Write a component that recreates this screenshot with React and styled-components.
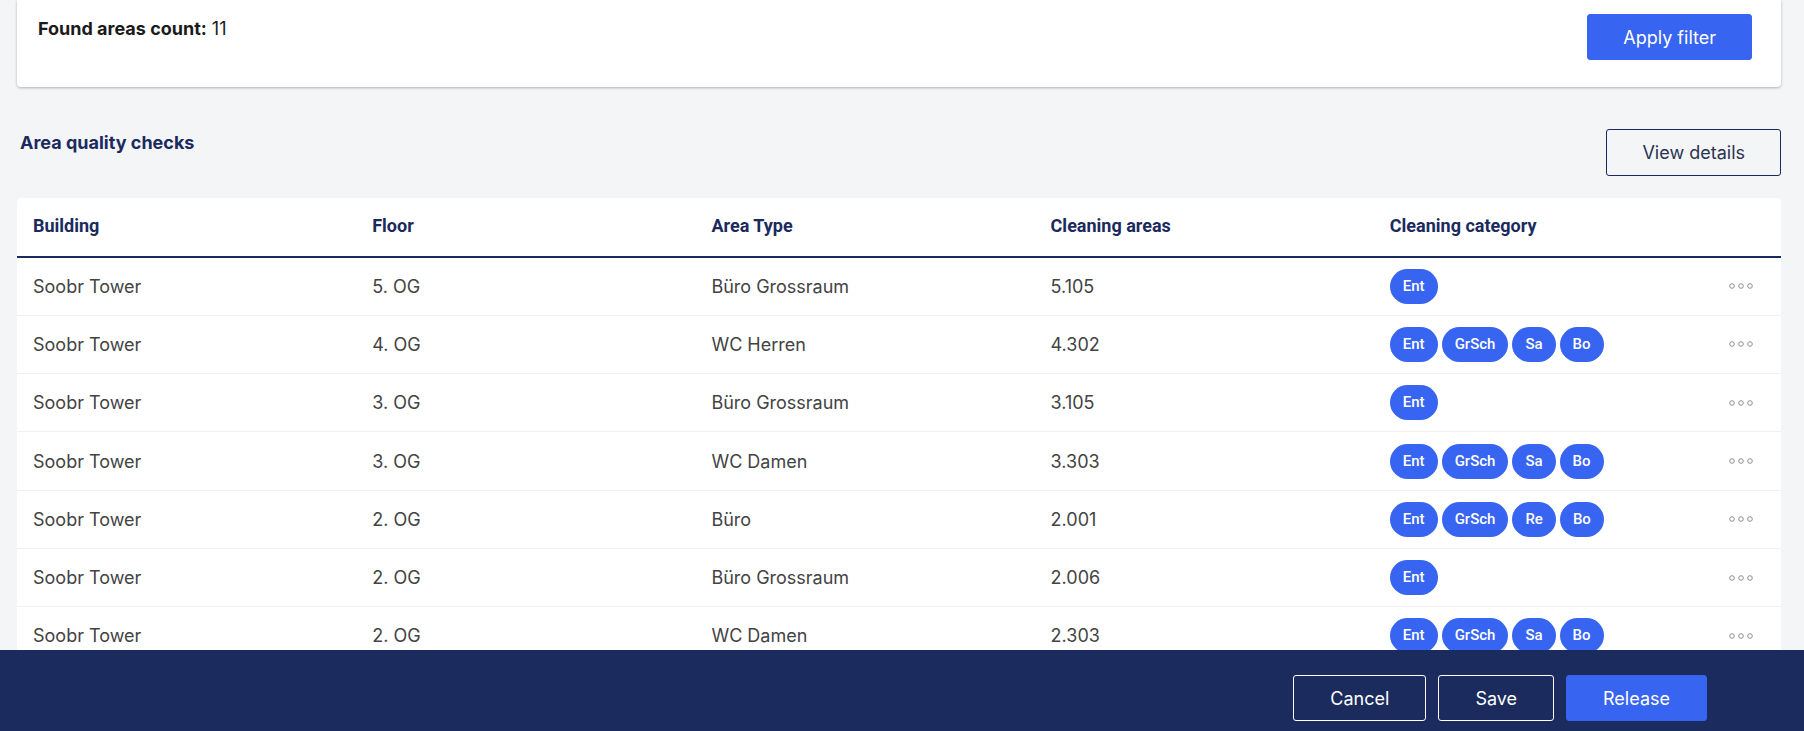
import React from 'react'
import styled, { createGlobalStyle } from 'styled-components'

const GlobalStyle = createGlobalStyle`
  body {
    margin: 0;
    background: #f4f5f7;
    font-family: Inter, "Noto Sans", sans-serif;
  }
`

const Page = styled.div`
  height: 100vh;
  display: flex;
  flex-direction: column;
  overflow: hidden;
`

const Main = styled.main`
  flex: 1;
  overflow: hidden;
  padding: 0 23px 0 17px;
`

const FilterCard = styled.section`
  background: #fff;
  border-radius: 0 0 4px 4px;
  box-shadow: 0 1px 3px rgba(0, 0, 0, .28);
  padding: 14px 29px 27px 21px;
  display: flex;
  justify-content: space-between;
  align-items: flex-start;
`

const Count = styled.div`
  padding-top: 4px;
  font-size: 18px;
  color: #1a1a1a;
  b {
    font-weight: 700;
  }
`

const Button = styled.button`
  height: ${p => p.h || 46}px;
  padding: 0 ${p => p.pad || 36}px;
  font-family: Inter, "Noto Sans", sans-serif;
  font-size: 18px;
  border-radius: 3px;
  cursor: pointer;
  border: 1px solid ${p => p.variant === 'primary' ? '#3764f0' : p.variant === 'ghost' ? '#fff' : '#1b2a5e'};
  background: ${p => p.variant === 'primary' ? '#3764f0' : 'transparent'};
  color: ${p => p.variant === 'outline' ? '#2b3350' : '#fff'};
`

const SectionHead = styled.div`
  display: flex;
  justify-content: space-between;
  align-items: flex-start;
  margin-top: 42px;
  margin-bottom: 22px;
`

const Title = styled.h2`
  margin: 3px 0 0 3px;
  font-size: 18px;
  font-weight: 700;
  color: #1b2a5e;
`

const Table = styled.div`
  background: #fff;
  border-radius: 4px 4px 0 0;
`

const Row = styled.div`
  display: grid;
  grid-template-columns: repeat(5, 1fr) 52px;
  align-items: center;
  padding-left: 16px;
  padding-bottom: ${p => p.head ? 3 : 0}px;
  height: ${p => p.head ? 54.5 : 57.3}px;
  border-bottom: ${p => p.head ? '2px solid #1b2a5e' : '1px solid #eef0f2'};
  font-family: ${p => p.head ? 'Roboto' : 'Inter'}, "Noto Sans", sans-serif;
  font-size: 18px;
  font-weight: ${p => p.head ? 700 : 400};
  color: ${p => p.head ? '#1b2a5e' : '#434343'};
`

const Badges = styled.div`
  display: flex;
  gap: 4px;
`

const Badge = styled.span`
  height: 35px;
  line-height: 35px;
  padding: 0 13px;
  border-radius: 18px;
  background: #3764f0;
  color: #fff;
  font-family: Roboto, "Noto Sans", sans-serif;
  font-size: 15px;
  font-weight: 500;
`

const More = styled.div`
  display: flex;
  align-items: center;
`

const Footer = styled.footer`
  height: 81px;
  flex-shrink: 0;
  background: #1b2b5e;
  display: flex;
  justify-content: flex-end;
  align-items: flex-start;
  gap: 12px;
  padding: 25px 97px 0 0;
  box-sizing: border-box;
`

const Dots = () => (
  <svg width="24" height="6" viewBox="0 0 24 6">
    {[3, 12, 21].map(x => (
      <circle key={x} cx={x} cy="3" r="2.3" fill="none" stroke="#8d8f94" strokeWidth="1" />
    ))}
  </svg>
)

const rows = [
  ['5. OG', 'Büro Grossraum', '5.105', ['Ent']],
  ['4. OG', 'WC Herren', '4.302', ['Ent', 'GrSch', 'Sa', 'Bo']],
  ['3. OG', 'Büro Grossraum', '3.105', ['Ent']],
  ['3. OG', 'WC Damen', '3.303', ['Ent', 'GrSch', 'Sa', 'Bo']],
  ['2. OG', 'Büro', '2.001', ['Ent', 'GrSch', 'Re', 'Bo']],
  ['2. OG', 'Büro Grossraum', '2.006', ['Ent']],
  ['2. OG', 'WC Damen', '2.303', ['Ent', 'GrSch', 'Sa', 'Bo']],
]

const App = () => {
  return (
    <Page>
      <GlobalStyle />
      <Main>
        <FilterCard>
          <Count><b>Found areas count:</b> 11</Count>
          <Button variant="primary" h={46} pad={35}>Apply filter</Button>
        </FilterCard>

        <SectionHead>
          <Title>Area quality checks</Title>
          <Button variant="outline" h={47} pad={35}>View details</Button>
        </SectionHead>

        <Table>
          <Row head>
            <div>Building</div>
            <div>Floor</div>
            <div>Area Type</div>
            <div>Cleaning areas</div>
            <div>Cleaning category</div>
            <div />
          </Row>
          {rows.map(([floor, type, area, cats], i) => (
            <Row key={i}>
              <div>Soobr Tower</div>
              <div>{floor}</div>
              <div>{type}</div>
              <div>{area}</div>
              <Badges>
                {cats.map(c => <Badge key={c}>{c}</Badge>)}
              </Badges>
              <More><Dots /></More>
            </Row>
          ))}
        </Table>
      </Main>
      <Footer>
        <Button variant="ghost" pad={36}>Cancel</Button>
        <Button variant="ghost" pad={36}>Save</Button>
        <Button variant="primary" pad={36}>Release</Button>
      </Footer>
    </Page>
  )
}

export default App
